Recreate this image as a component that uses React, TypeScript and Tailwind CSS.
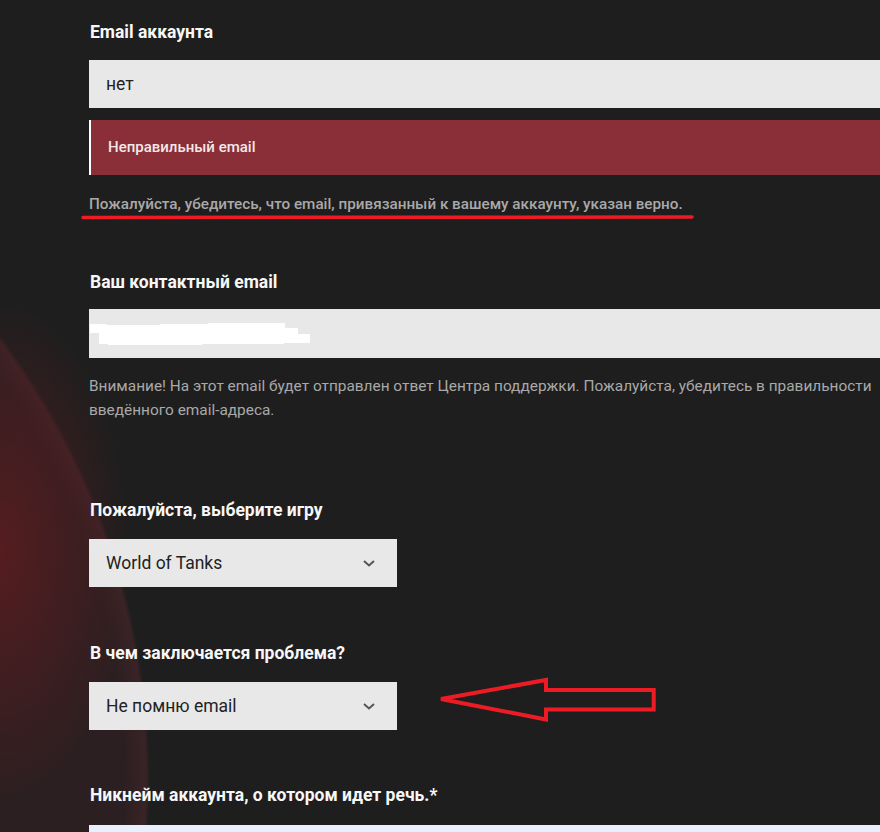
import { ReactNode } from "react";

function Label({ children, className = "" }: { children: ReactNode; className?: string }) {
  return <div className={`text-[17.5px] leading-[24px] font-bold text-[#f7f7f7] ${className}`}>{children}</div>;
}

function Select({ value }: { value: string }) {
  return <div className="w-[308px] h-[48px] bg-[#e8e8e8] flex items-center justify-between pl-[17px] pr-[22px]">
      <span className="text-[17.5px] text-[#222]">{value}</span>
      <svg width="12" height="7" viewBox="0 0 12 7" fill="none">
        <path d="M1 1L6 5.5L11 1" stroke="#555" strokeWidth="2" />
      </svg>
    </div>;
}

export default function App() {
  return <div className="relative w-full min-h-[832px] overflow-hidden font-['Roboto',sans-serif] bg-[#1e1e1e] bg-[radial-gradient(ellipse_130px_250px_at_0px_550px,rgba(92,28,31,0.85),transparent),radial-gradient(circle_735px_at_-585px_780px,#2c1f21_96.5%,#3a2326_99.4%,transparent_100%)]">
      <div className="w-[800px] ml-[89px] pt-[20px]">
        {/* email аккаунта */}
        <Label className="ml-px">Email аккаунта</Label>
        <div className="mt-[16px] h-[48px] bg-[#e8e8e8] flex items-center pl-[17px] text-[17.5px] text-[#222]">нет</div>
        <div className="mt-[12px] h-[55px] bg-[#8a2f37] border-l-2 border-white flex items-center pl-[17px] text-[15px] font-medium text-[#f3e8e8]">
          Неправильный email
        </div>
        <p className="mt-[17px] text-[15.25px] leading-[24px] font-medium text-[#a9a9a9]">
          Пожалуйста, убедитесь, что email, привязанный к вашему аккаунту, указан верно.
        </p>

        {/* контактный email */}
        <Label className="mt-[54px] ml-px">Ваш контактный email</Label>
        <div className="mt-[15px] h-[49px] bg-[#e8e8e8] flex items-center pl-px">
          <svg width="221" height="24" viewBox="0 0 221 24">
            <polygon fill="#fff" points="0,2 16,2 16,3 70,3 70,2 118,2 118,1 195,1 195,6 208,6 208,12 220,12 220,21 194,21 194,22 112,22 112,23 18,23 18,22 9,22 9,11 0,11" />
          </svg>
        </div>
        <p className="mt-4 text-[15.4px] leading-[24px] text-[#a9a9a9]">
          Внимание! На этот email будет отправлен ответ Центра поддержки. Пожалуйста, убедитесь в правильности введённого email-адреса.
        </p>

        {/* игра */}
        <Label className="mt-[76px] ml-px">Пожалуйста, выберите игру</Label>
        <div className="mt-[17px]">
          <Select value="World of Tanks" />
        </div>

        <Label className="mt-[54px] ml-px">В чем заключается проблема?</Label>
        <div className="mt-[17px]">
          <Select value="Не помню email" />
        </div>

        <Label className="mt-[53px] ml-px">Никнейм аккаунта, о котором идет речь.*</Label>
        <div className="mt-[18px] h-[48px] bg-[#e8f0fe]" />
      </div>

      {/* red annotations drawn over the screenshot */}
      <svg className="absolute inset-0 pointer-events-none" width="880" height="832" viewBox="0 0 880 832" fill="none">
        <line x1="83" y1="217.5" x2="692" y2="217" stroke="#ed1c24" strokeWidth="3.5" strokeLinecap="round" />
        <polygon points="441,699 546,680 546,690 653.7,690 653.7,709.5 546,709.5 546,719.5" stroke="#ed1c24" strokeWidth="4" strokeLinejoin="miter" />
      </svg>
    </div>;
}
